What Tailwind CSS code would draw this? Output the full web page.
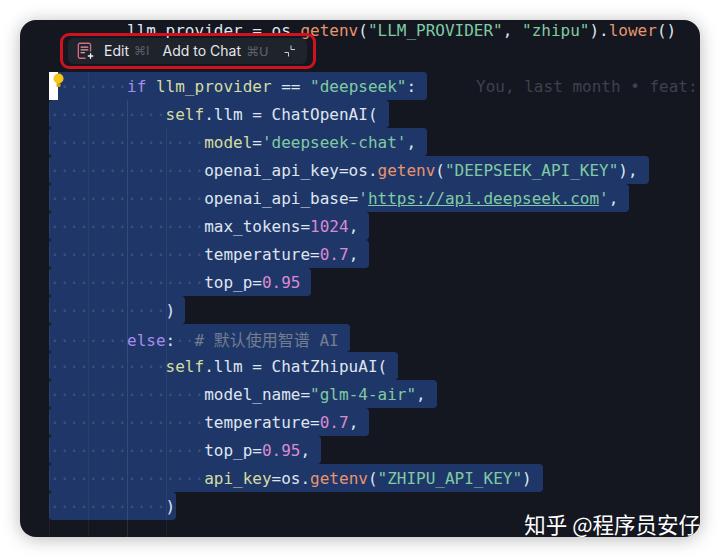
<!DOCTYPE html>
<html lang="en">
<head>
    <meta charset="UTF-8">
    <script src="https://cdn.jsdelivr.net/npm/@tailwindcss/browser@4"></script>
    <title>Editor</title>
</head>
<body class="bg-white w-[720px] h-[557px] overflow-hidden pt-5 pl-5">
    <main class="relative w-[680px] h-[517px] rounded-[16px] bg-[#14171f] overflow-hidden shadow-[0_2px_18px_rgba(0,0,0,0.28)] font-['DejaVu_Sans_Mono',monospace] text-[16px] text-[#dfe5f0]">
        <!-- indent guides -->
        <div class="absolute top-[52px] bottom-0 left-[29px] w-px bg-white/5"></div>
        <div class="absolute top-[52px] bottom-0 left-[68px] w-px bg-white/5"></div>
        <div class="absolute top-[80px] bottom-0 left-[107px] w-px bg-white/10"></div>
        <div class="absolute top-[108px] bottom-0 left-[146px] w-px bg-white/5"></div>

        <div class="flex flex-col items-start pl-[29px] mt-[-4px] whitespace-pre leading-[30px]">
            <div class="h-7 pl-[1px]">        llm_provider = os.<span class="text-[#e8946f]">getenv</span>(<span class="text-[#7fcba4]">"LLM_PROVIDER"</span>, <span class="text-[#7fcba4]">"zhipu"</span>).<span class="text-[#e8946f]">lower</span>()</div>
            <div class="h-7"></div>

            <div class="flex h-7 w-full">
                <div class="bg-[#1f3768] rounded-sm pl-[1px] pr-[11px]"><span class="text-white/15">········</span><span class="text-[#a48ce8]">if</span> <span class="text-[#d5dca0]">llm_provider</span> == <span class="text-[#7fcba4]">"deepseek"</span>:</div>
                <div class="ml-[49px] text-[#3d424e]">You, last month • feat:</div>
            </div>
            <div class="h-7 bg-[#1f3768] rounded-sm pl-[1px] pr-[11px]"><span class="text-white/15">············</span><span class="text-[#d5dca0]">self</span>.llm = ChatOpenAI(</div>
            <div class="h-7 bg-[#1f3768] rounded-sm pl-[1px] pr-[11px]"><span class="text-white/15">················</span><span class="text-[#d5dca0]">model</span>=<span class="text-[#7fcba4]">'deepseek-chat'</span>,</div>
            <div class="h-7 bg-[#1f3768] rounded-sm pl-[1px] pr-[11px]"><span class="text-white/15">················</span>openai_api_key=os.<span class="text-[#e8946f]">getenv</span>(<span class="text-[#7fcba4]">"DEEPSEEK_API_KEY"</span>),</div>
            <div class="h-7 bg-[#1f3768] rounded-sm pl-[1px] pr-[11px]"><span class="text-white/15">················</span>openai_api_base=<span class="text-[#7fcba4]">'<span class="underline">https://api.deepseek.com</span>'</span>,</div>
            <div class="h-7 bg-[#1f3768] rounded-sm pl-[1px] pr-[11px]"><span class="text-white/15">················</span>max_tokens=<span class="text-[#d98ad2]">1024</span>,</div>
            <div class="h-7 bg-[#1f3768] rounded-sm pl-[1px] pr-[11px]"><span class="text-white/15">················</span>temperature=<span class="text-[#d98ad2]">0.7</span>,</div>
            <div class="h-7 bg-[#1f3768] rounded-sm pl-[1px] pr-[11px]"><span class="text-white/15">················</span>top_p=<span class="text-[#d98ad2]">0.95</span></div>
            <div class="h-7 bg-[#1f3768] rounded-sm pl-[1px] pr-[10px]"><span class="text-white/15">············</span>)</div>
            <div class="h-7 bg-[#1f3768] rounded-sm pl-[1px] pr-[11px]"><span class="text-white/15">········</span><span class="text-[#a48ce8]">else</span>:<span class="text-white/15">··</span><span class="text-[#737d8f]"># <span class="font-['Noto_Sans_CJK_SC',sans-serif]">默认使用智谱</span> AI</span></div>
            <div class="h-7 bg-[#1f3768] rounded-sm pl-[1px] pr-[11px]"><span class="text-white/15">············</span><span class="text-[#d5dca0]">self</span>.llm = ChatZhipuAI(</div>
            <div class="h-7 bg-[#1f3768] rounded-sm pl-[1px] pr-[11px]"><span class="text-white/15">················</span>model_name=<span class="text-[#7fcba4]">"glm-4-air"</span>,</div>
            <div class="h-7 bg-[#1f3768] rounded-sm pl-[1px] pr-[11px]"><span class="text-white/15">················</span>temperature=<span class="text-[#d98ad2]">0.7</span>,</div>
            <div class="h-7 bg-[#1f3768] rounded-sm pl-[1px] pr-[11px]"><span class="text-white/15">················</span>top_p=<span class="text-[#d98ad2]">0.95</span>,</div>
            <div class="h-7 bg-[#1f3768] rounded-sm pl-[1px] pr-[11px]"><span class="text-white/15">················</span><span class="text-[#d5dca0]">api_key</span>=os.<span class="text-[#e8946f]">getenv</span>(<span class="text-[#7fcba4]">"ZHIPU_API_KEY"</span>)</div>
            <div class="h-7 bg-[#1f3768] rounded-sm pl-[1px] pr-[1px]"><span class="text-white/15">············</span>)</div>
        </div>

        <!-- cursor and lightbulb -->
        <div class="absolute left-[29px] top-[52px] w-[9px] h-7 bg-white"></div>
        <svg class="absolute left-[32px] top-[52px]" width="13" height="17" viewBox="0 0 13 17">
            <circle cx="6.5" cy="6.5" r="5" fill="#f5c518"/>
            <rect x="4.5" y="11" width="4" height="4" rx="1" fill="#d9a514"/>
        </svg>

        <!-- inline edit toolbar -->
        <div class="absolute left-[48px] top-[18px] w-[239px] h-[26px] rounded-md bg-[#1f232b] flex items-center pl-[7px] font-['Inter',sans-serif] text-[14px] leading-none text-[#e4e7ec]">
            <svg class="mr-[9px]" width="20" height="20" viewBox="0 0 18 18" fill="none" stroke-width="1.200" stroke-linecap="round">
                <path d="M9 15.500H4.500A1.500 1.500 0 0 1 3 14V3.500A1.500 1.500 0 0 1 4.500 2h8A1.500 1.500 0 0 1 14 3.500V9" stroke="#d9697f"/>
                <path d="M5.500 5.500h6M5.500 8h6M5.500 10.500h3" stroke="#e39aa8"/>
                <path d="M14 11.500v4M12 13.500h4" stroke="#f0f2f5"/>
            </svg>
            <span>Edit</span>
            <span class="ml-[5px] text-[12px] text-[#5b616c] font-['DejaVu_Sans',sans-serif]">⌘I</span>
            <span class="ml-[13px]">Add to Chat</span>
            <span class="ml-[5px] text-[#5b616c] font-['DejaVu_Sans',sans-serif] text-[13px]">⌘U</span>
            <svg class="ml-[14px]" width="14" height="14" viewBox="0 0 14 14" fill="none" stroke="#c9ccd3" stroke-width="1">
                <path d="M8 1.500V5.500H12M1.500 8.500H5.500V12.500"/>
            </svg>
        </div>

        <!-- red annotation box -->
        <div class="absolute left-[40px] top-[13px] w-[256px] h-[36px] rounded-[9px] border-[3px] border-[#d0121f]"></div>

        <!-- watermark -->
        <div class="absolute right-0 bottom-0 font-['Noto_Sans_CJK_SC',sans-serif] text-[21.5px] leading-[26px] text-white">知乎 @程序员安仔</div>
    </main>
</body>
</html>
